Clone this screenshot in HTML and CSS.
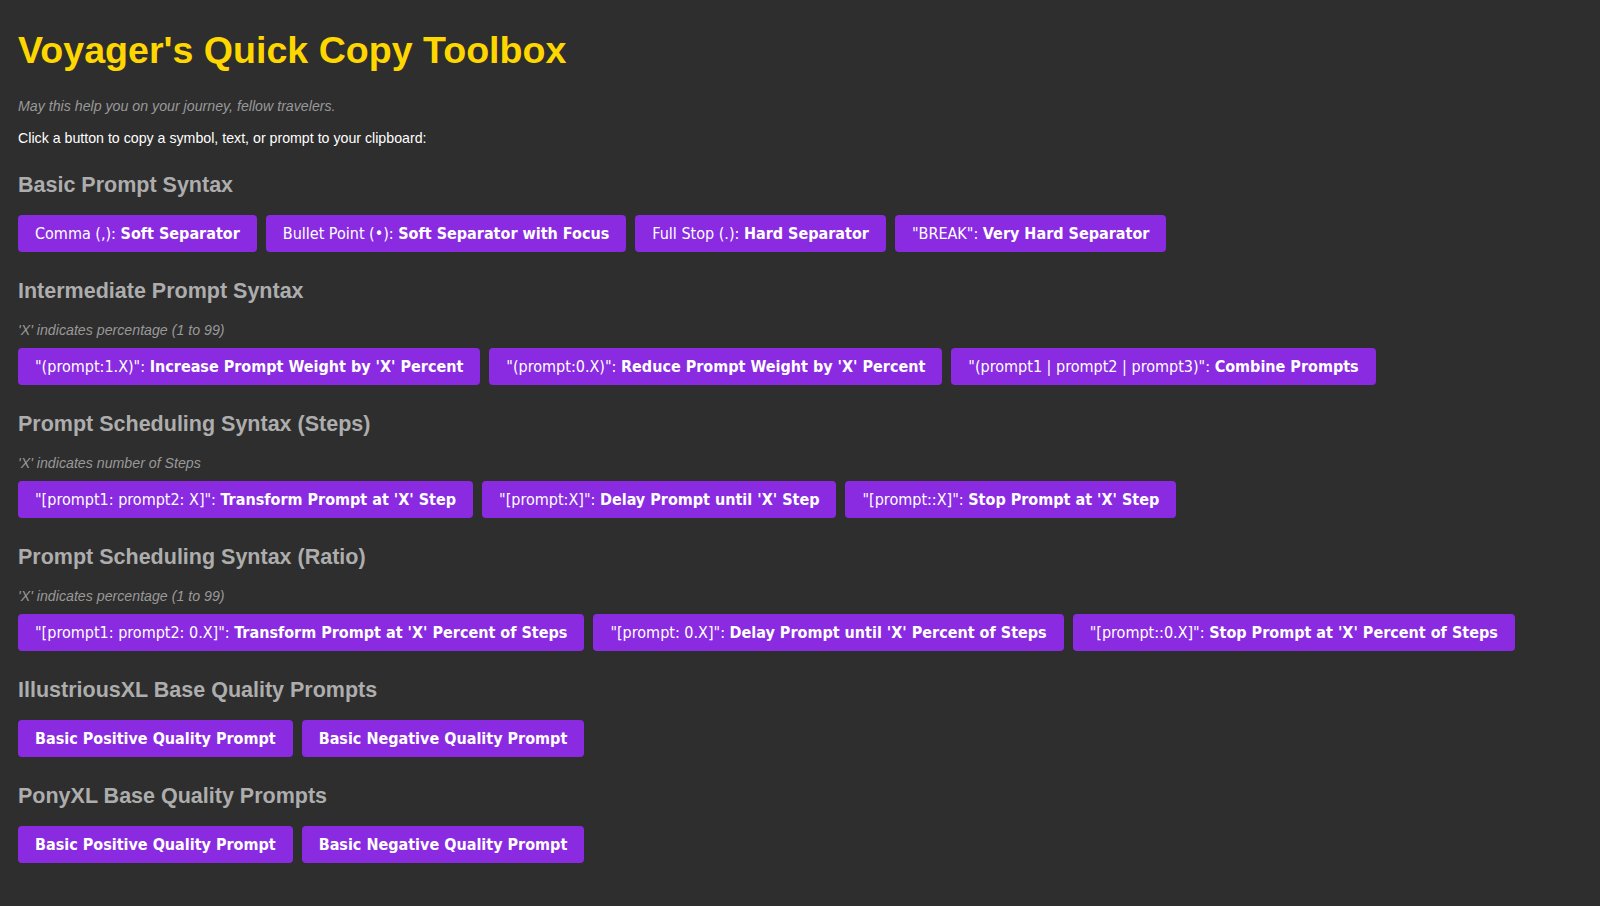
FILE: index.html
```html
<!DOCTYPE html>
<html lang="en">
<head>
  <meta charset="UTF-8">
  <title>Voyager's Quick Copy Toolbox</title>
  <link rel="stylesheet" href="styles.css">
</head>
<body>
  <h1>Voyager's Quick Copy Toolbox</h1>
  <p class="tagline">May this help you on your journey, fellow travelers.</p>
  <p class="intro">Click a button to copy a symbol, text, or prompt to your clipboard:</p>

  <h2>Basic Prompt Syntax</h2>
  <div class="btn-row">
    <button>Comma (,): <strong>Soft Separator</strong></button>
    <button>Bullet Point (•): <strong>Soft Separator with Focus</strong></button>
    <button>Full Stop (.): <strong>Hard Separator</strong></button>
    <button>"BREAK": <strong>Very Hard Separator</strong></button>
  </div>

  <h2>Intermediate Prompt Syntax</h2>
  <p class="note">'X' indicates percentage (1 to 99)</p>
  <div class="btn-row after-note">
    <button>"(prompt:1.X)": <strong>Increase Prompt Weight by 'X' Percent</strong></button>
    <button>"(prompt:0.X)": <strong>Reduce Prompt Weight by 'X' Percent</strong></button>
    <button>"(prompt1 | prompt2 | prompt3)": <strong>Combine Prompts</strong></button>
  </div>

  <h2>Prompt Scheduling Syntax (Steps)</h2>
  <p class="note">'X' indicates number of Steps</p>
  <div class="btn-row after-note">
    <button>"[prompt1: prompt2: X]": <strong>Transform Prompt at 'X' Step</strong></button>
    <button>"[prompt:X]": <strong>Delay Prompt until 'X' Step</strong></button>
    <button>"[prompt::X]": <strong>Stop Prompt at 'X' Step</strong></button>
  </div>

  <h2>Prompt Scheduling Syntax (Ratio)</h2>
  <p class="note">'X' indicates percentage (1 to 99)</p>
  <div class="btn-row after-note">
    <button>"[prompt1: prompt2: 0.X]": <strong>Transform Prompt at 'X' Percent of Steps</strong></button>
    <button>"[prompt: 0.X]": <strong>Delay Prompt until 'X' Percent of Steps</strong></button>
    <button>"[prompt::0.X]": <strong>Stop Prompt at 'X' Percent of Steps</strong></button>
  </div>

  <h2>IllustriousXL Base Quality Prompts</h2>
  <div class="btn-row">
    <button><strong>Basic Positive Quality Prompt</strong></button>
    <button><strong>Basic Negative Quality Prompt</strong></button>
  </div>

  <h2>PonyXL Base Quality Prompts</h2>
  <div class="btn-row">
    <button><strong>Basic Positive Quality Prompt</strong></button>
    <button><strong>Basic Negative Quality Prompt</strong></button>
  </div>
</body>
</html>
```

FILE: styles.css
```css
body {
  margin: 0;
  padding: 0 18px 40px;
  font-family: 'Liberation Sans', Arial, sans-serif;
  background: #2e2e2e;
  color: #fff;
}

h1 {
  margin: 28px 0 0;
  font-size: 37.6px;
  line-height: 44px;
  color: #ffd700;
}

.tagline {
  margin: 26px 0 0;
  font-size: 14.2px;
  line-height: 16px;
  font-style: italic;
  color: #999;
}

.intro {
  margin: 16px 0 0;
  font-size: 14.2px;
  line-height: 16px;
  color: #fff;
}

h2 {
  margin: 27px 0 0;
  font-size: 21.5px;
  line-height: 24px;
  color: #adadad;
}

.note {
  margin: 19px 0 0;
  font-size: 14.2px;
  line-height: 16px;
  font-style: italic;
  color: #999;
}

.btn-row {
  display: flex;
  flex-wrap: wrap;
  gap: 9px;
  margin-top: 18px;
}

.btn-row.after-note {
  margin-top: 10px;
}

.btn-row button {
  font-family: 'DejaVu Sans Condensed', 'DejaVu Sans', sans-serif;
  font-size: 16px;
  line-height: 19px;
  padding: 9px 17px;
  border: none;
  border-radius: 4px;
  background-color: #8a2be2;
  color: #fff;
  cursor: pointer;
}

.btn-row button:hover {
  background-color: #7a1fd0;
}
```
